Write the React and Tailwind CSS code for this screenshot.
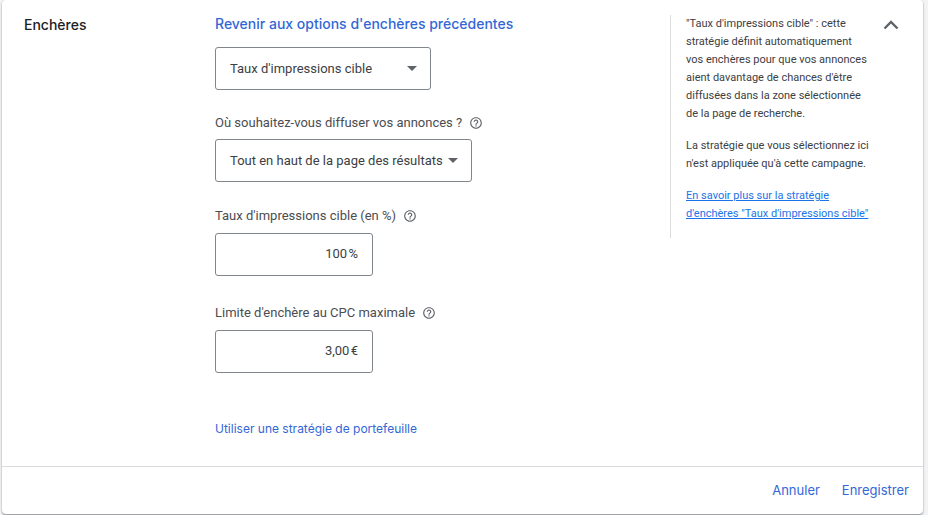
import { useState } from "react";

function HelpIcon() {
  return (
    <svg viewBox="0 0 24 24" className="size-[14px]" fill="#5f6368" aria-hidden="true">
      <path d="M11 18h2v-2h-2v2zm1-16C6.48 2 2 6.48 2 12s4.48 10 10 10 10-4.48 10-10S17.520 2 12 2zm0 18c-4.410 0-8-3.590-8-8s3.590-8 8-8 8 3.590 8 8-3.590 8-8 8zm0-14c-2.210 0-4 1.790-4 4h2c0-1.100.9-2 2-2s2 .9 2 2c0 2-3 1.750-3 5h2c0-2.250 3-2.500 3-5 0-2.210-1.790-4-4-4z" />
    </svg>
  );
}

function FieldLabel({ htmlFor, children }) {
  return (
    <div className="flex items-center gap-[7px]">
      <label htmlFor={htmlFor} className="text-[13px] leading-4 text-[#4a4d51]">
        {children}
      </label>
      <button type="button" aria-label="Aide" className="flex">
        <HelpIcon />
      </button>
    </div>
  );
}

function SelectBox({ id, label, width, options }) {
  return (
    <div className={`relative ${width}`}>
      <select
        id={id}
        aria-label={label}
        className="h-[43px] w-full appearance-none rounded-[3px] border border-[#80868b] bg-white pl-[14px] text-[13px] text-[#3c4043]"
      >
        {options.map((option) => (
          <option key={option}>{option}</option>
        ))}
      </select>
      <svg
        viewBox="0 0 10 5"
        className="pointer-events-none absolute top-[19px] right-[14px] h-[5px] w-[10px]"
        fill="#5f6368"
        aria-hidden="true"
      >
        <path d="M0 0h10L5 5z" />
      </svg>
    </div>
  );
}

function AmountInput({ id, initial }) {
  const [value, setValue] = useState(initial);
  return (
    <input
      id={id}
      type="text"
      value={value}
      onChange={(event) => setValue(event.target.value)}
      className="h-[43px] w-[158px] rounded-[3px] border border-[#80868b] bg-white px-[14px] pb-[2px] text-right text-[13px] text-[#3c4043]"
    />
  );
}

export default function App() {
  return (
    <div className="min-h-screen bg-[#f1f3f4] pr-[5px] pb-px pl-[2px] font-['Roboto',sans-serif]">
      <section className="rounded-[4px] bg-white shadow-[0_1px_2px_#80868b]">
        <div className="flex items-start pt-[15px] pr-[24px] pb-[28px] pl-[22px]">
          <h2 className="w-[191px] shrink-0 pt-px font-['Inter',sans-serif] text-[14px] leading-[18px] font-medium text-[#202124]">
            Enchères
          </h2>

          <div className="flex flex-1 flex-col items-start">
            <a href="#options" className="font-['Inter',sans-serif] text-[14px] leading-[18px] font-medium text-[#3367d6]">
              Revenir aux options d'enchères précédentes
            </a>
            <div className="mt-[14px]">
              <SelectBox
                id="strategy"
                label="Stratégie d'enchères"
                width="w-[216px]"
                options={["Taux d'impressions cible"]}
              />
            </div>

            <div className="mt-[25px] flex flex-col gap-2">
              <FieldLabel htmlFor="placement">Où souhaitez-vous diffuser vos annonces ?</FieldLabel>
              <SelectBox
                id="placement"
                width="w-[257px]"
                options={["Tout en haut de la page des résultats"]}
              />
            </div>

            <div className="mt-[26px] flex flex-col gap-[9px]">
              <FieldLabel htmlFor="share">Taux d'impressions cible (en %)</FieldLabel>
              <AmountInput id="share" initial={"100\u200A%"} />
            </div>

            <div className="mt-[29px] flex flex-col gap-[9px]">
              <FieldLabel htmlFor="limit">Limite d'enchère au CPC maximale</FieldLabel>
              <AmountInput id="limit" initial={"3,00\u200A€"} />
            </div>

            <a href="#portfolio" className="mt-[47px] font-['Inter',sans-serif] text-[12px] leading-[18px] text-[#3367d6]">
              Utiliser une stratégie de portefeuille
            </a>
          </div>

          <aside className="flex w-[200px] shrink-0 flex-col gap-[14px] border-l border-[#dadce0] pb-[15px] pl-[15px] text-[11px] leading-[18px] whitespace-nowrap text-[#3c4043]">
            <p>
              "Taux d'impressions cible" : cette
              <br />
              stratégie définit automatiquement
              <br />
              vos enchères pour que vos annonces
              <br />
              aient davantage de chances d'être
              <br />
              diffusées dans la zone sélectionnée
              <br />
              de la page de recherche.
            </p>
            <p>
              La stratégie que vous sélectionnez ici
              <br />
              n'est appliquée qu'à cette campagne.
            </p>
            <a href="#help" className="text-[#1a73e8] underline">
              En savoir plus sur la stratégie
              <br />
              d'enchères "Taux d'impressions cible"
            </a>
          </aside>

          <button type="button" aria-label="Réduire" className="mt-[5px] ml-[13px] flex shrink-0">
            <svg viewBox="0 0 16 10" className="h-[10px] w-4" fill="none" stroke="#5f6368" strokeWidth="2.4" aria-hidden="true">
              <path d="M1.500 8.500L8 2l6.500 6.500" />
            </svg>
          </button>
        </div>

        <footer className="flex h-[48px] items-center justify-end gap-[22px] border-t border-[#dadce0] pr-[14px] font-['Inter',sans-serif] text-[13px] text-[#3367d6]">
          <button type="button">Annuler</button>
          <button type="button">Enregistrer</button>
        </footer>
      </section>
    </div>
  );
}
